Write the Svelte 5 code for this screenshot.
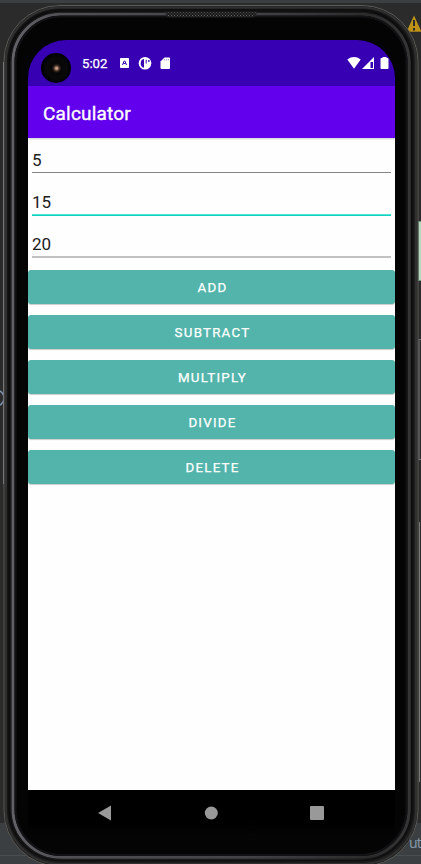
<script>
  let values = $state(['5', '15', '20']);
  let active = $state(1);
  const actions = ['ADD', 'SUBTRACT', 'MULTIPLY', 'DIVIDE', 'DELETE'];
</script>

<main class="desktop">
  <svg class="backdrop" width="421" height="864" viewBox="0 0 421 864" aria-hidden="true">
    <defs>
      <linearGradient id="rim" x1="0" x2="1">
        <stop offset="0" stop-color="#626167" />
        <stop offset=".12" stop-color="#515155" />
        <stop offset=".6" stop-color="#434346" />
        <stop offset=".9" stop-color="#2b2b2c" />
        <stop offset="1" stop-color="#353536" />
      </linearGradient>
      <pattern id="mesh" width="3" height="3" patternUnits="userSpaceOnUse">
        <rect width="3" height="3" fill="#171717" />
        <path d="M0 .5h1M1.5 2h1" stroke="#666" />
      </pattern>
    </defs>
    <rect width="421" height="864" fill="#2b2b2b" />
    <rect width="421" height="3" fill="#3c3f41" />
    <rect y="823" width="421" height="41" fill="#3c3f41" />
    <path d="M0 855.5h421" stroke="#4a4d4f" />
    <circle cx="-4" cy="398" r="8" fill="none" stroke="#7d96b5" stroke-width="1.5" />
    <path d="M414 15.5l7.5 16.3h-15z" fill="#be9117" />
    <path d="M414 20v6M414 28v2.5" stroke="#2b2b2b" stroke-width="2" />
    <rect x="418.5" y="221.500" width="6" height="59" fill="#b5d9bf" stroke="#6d9678" />
    <path d="M422 339.500h-3v120h3M419.500 522v260" stroke="#77797a" fill="none" />
    <rect x="4" y="5.500" width="414" height="861" rx="56" fill="#1d1d1e" stroke="#5c5c57" />
    <rect x="6" y="7.500" width="410" height="856.500" rx="54" fill="none" stroke="#303031" stroke-width="2" />
    <rect x="8.500" y="10" width="404" height="850.500" rx="52" fill="#090909" stroke="#101010" stroke-width="2" />
    <rect x="10.500" y="12" width="400" height="847.500" rx="50" fill="none" stroke="#1c1c1d" />
    <rect x="13" y="14.300" width="396" height="843" rx="48" fill="#040405" stroke="url(#rim)" stroke-width="3" />
    <rect x="15.500" y="16.500" width="391" height="838.500" rx="46" fill="none" stroke="#121214" stroke-width="2" />
    <path d="M3.500 62v422" stroke="#77777a" />
    <path d="M165 12h92l-2 4q-1 1-3 1h-82q-2 0-3-1z" fill="url(#mesh)" stroke="#272727" stroke-width=".7" />
  </svg>
  <span class="clipped">ut</span>

  <section class="screen">
    <header class="status">
      <span class="camera"></span>
      <time>5:02</time>
      <svg class="notices" width="54" height="14" viewBox="0 0 54 14" fill="#fff">
        <rect x="1" y="2" width="9" height="10" rx=".7" />
        <path d="M3.500 9l1.600-4h.8l1.600 4M4.300 7.500h2.400" fill="none" stroke="#3700b3" stroke-width="1" />
        <circle cx="26" cy="7.300" r="6.300" />
        <path d="M25 3v8.800q-3.300-.8-3.300-4.500T25 3zM26.700 3.800h1v3.700h-1zM29.200 4h1.300v2h-1.300z" fill="#3700b3" />
        <path d="M45.500 1.500H50q1 0 1 1V12q0 1-1 1h-7.500q-1 0-1-1V5.500z" />
        <path d="M45.500 3v1.500M47.500 3v1.500M49.500 3v1.500" stroke="#3700b3" stroke-width=".4" />
      </svg>
      <svg class="signals" width="43" height="14" viewBox="0 0 43 14" fill="#fff">
        <path d="M.3 3.400Q7-1.400 13.700 3.400L7 12.800z" />
        <path d="M15 13L27 1v12z" />
        <path d="M23.500 6h2.500v6h-2.500z" fill="#3700b3" />
        <path d="M35.500 1h4v1h1q1 0 1 1v9q0 1-1 1h-6q-1 0-1-1V3q0-1 1-1h1z" />
      </svg>
    </header>
    <div class="toolbar"><h1>Calculator</h1></div>
    <div class="content">
      <div class="fields">
        {#each values as _, i}
          <label class:active={active === i}>
            <input bind:value={values[i]} onfocus={() => (active = i)} aria-label="Number {i + 1}" />
            <i class:last={i === 2}></i>
          </label>
        {/each}
      </div>
      <div class="actions">
        {#each actions as action}
          <button>{action}</button>
        {/each}
      </div>
    </div>
    <nav>
      <svg width="15" height="16" viewBox="0 0 15 16"><path d="M1 8L14 .5v15z" fill="#999" /></svg>
      <svg width="14" height="14" viewBox="0 0 14 14"><circle cx="7.300" cy="7" r="6.500" fill="#999" /></svg>
      <svg width="14" height="14" viewBox="0 0 14 14"><rect width="14" height="14" rx="1" fill="#999" /></svg>
    </nav>
  </section>
</main>

<style>
  :global(body) { margin: 0; overflow: hidden; background: #2b2b2b; }
  .desktop {
    position: relative;
    box-sizing: border-box;
    width: 421px;
    height: 864px;
    padding: 40px 26px 0 28px;
    overflow: hidden;
    font-family: Roboto, sans-serif;
  }
  .backdrop { position: absolute; inset: 0; }
  .clipped {
    position: absolute;
    left: 409px;
    top: 834px;
    color: #8197a8;
    font: 14px/18px "Noto Sans", sans-serif;
    letter-spacing: -1px;
  }
  .screen {
    position: relative;
    display: flex;
    flex-direction: column;
    width: 367px;
    height: 796px;
    overflow: hidden;
    border-radius: 38px 38px 0 0;
    background: linear-gradient(#000 780px, #040405);
  }
  .status {
    display: flex;
    align-items: center;
    box-sizing: border-box;
    height: 46px;
    padding: 0 5px 0 13px;
    background: #3700b3;
    color: #fff;
  }
  .camera {
    width: 30px;
    height: 30px;
    margin-top: 10px;
    border-radius: 50%;
    background: radial-gradient(circle at 52% 51%, #c79c80 0 1px, #6e5343 2px, #251a17 3.500px, #060606 5px, #090909 10px, #000 15px);
  }
  time {
    width: 37px;
    margin: 2px 0 0 11px;
    font-size: 13.200px;
    line-height: 16px;
    -webkit-text-stroke: .25px #fff;
  }
  .signals { margin-left: auto; }
  .toolbar {
    z-index: 1;
    display: flex;
    align-items: center;
    height: 52px;
    padding: 1px 15px 0;
    box-sizing: border-box;
    background: #6200ee;
    box-shadow: 0 1px 2px #0003;
  }
  h1 {
    margin: 2px 0 0;
    color: #fff;
    font-size: 19px;
    font-weight: 400;
    line-height: 24px;
    letter-spacing: .2px;
    -webkit-text-stroke: .35px #fff;
  }
  .content { height: 652px; background: #fefefe; }
  .fields { padding: 1px 4px 0; }
  label { display: flex; flex-direction: column; height: 42px; }
  input {
    box-sizing: border-box;
    width: 100%;
    height: 33px;
    padding: 9px 0 0;
    border: 0;
    outline: 0;
    background: transparent;
    color: #202020;
    font: 17px/22px Roboto, sans-serif;
  }
  i { height: 1px; background: #858585; }
  .active i { height: 2px; background: linear-gradient(#4de5d8 50%, #16cec0 50%); }
  .last { height: 2px; background: #c2c2c2; }
  .actions { display: flex; flex-direction: column; gap: 11px; padding-top: 5px; }
  button {
    height: 34px;
    padding: 2px 0 0 2px;
    border: 0;
    border-radius: 3px;
    background: #52b4ab;
    color: #fff;
    box-shadow: 0 1px 1px #0003;
    font: 400 13.300px/18px Roboto, sans-serif;
    letter-spacing: 1.250px;
    -webkit-text-stroke: .25px #fff;
  }
  nav {
    display: flex;
    justify-content: space-between;
    align-items: center;
    height: 46px;
    padding: 0 71px 0 69px;
  }
</style>
